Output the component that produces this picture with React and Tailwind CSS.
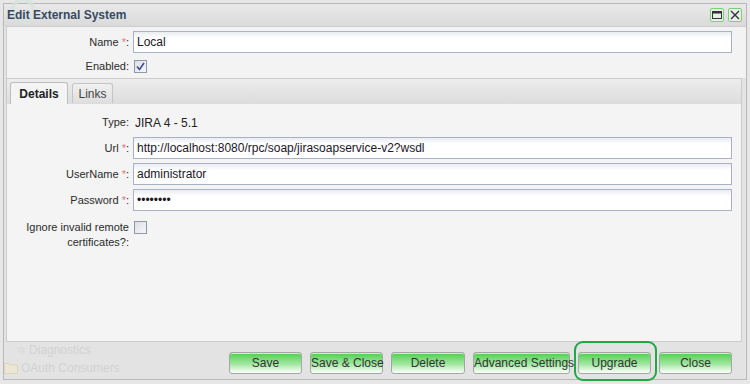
import { useState } from 'react'

const LABEL = "text-[11px] text-[#2b2b2b] font-['Liberation_Sans',Arial,sans-serif]"
const INPUT =
  "block h-[22px] w-[599px] border border-[#aab1c5] bg-gradient-to-b from-[#e9ecf1] via-white via-[30%] to-white px-[3px] text-[12px] text-[#1c1628] font-['Liberation_Sans',Arial,sans-serif] outline-none"

function Req() {
  return <span className="text-[#e87878]"> *</span>
}

function Row({ label, required, children, className = '' }) {
  return (
    <div className={`flex items-center ${className}`}>
      <div className={`w-[123px] pr-[1px] text-right ${LABEL}`}>
        {label}
        {required && <Req />}:
      </div>
      <div className="ml-[3px]">{children}</div>
    </div>
  )
}

function Checkbox({ checked, onChange }) {
  return (
    <button
      type="button"
      onClick={onChange}
      className="ml-[1px] flex h-[13px] w-[13px] items-center justify-center border border-[#8e98a8] bg-gradient-to-br from-[#dcdfe4] to-[#f6f7f9]"
    >
      {checked && (
        <svg width="9" height="9" viewBox="0 0 9 9">
          <path d="M1 4.5 L3.5 7.5 L8 1" fill="none" stroke="#3b4f8c" strokeWidth="1.6" />
        </svg>
      )}
    </button>
  )
}

function GreenButton({ label, width, highlight }) {
  return (
    <div className="relative shrink-0">
      <button
        type="button"
        style={{ width }}
        className="block h-[22px] whitespace-nowrap rounded-[3px] border border-[#a6a6a6] bg-gradient-to-b from-[#45d045] via-[#a0e6a0] via-[55%] to-white px-0 text-[12px] leading-[20px] text-[#333] font-['Liberation_Sans',Arial,sans-serif] shadow-[inset_0_1px_0_#c8f0c8]"
      >
        {label}
      </button>
      {highlight && (
        <div className="pointer-events-none absolute -left-[4px] -right-[6px] -top-[11px] -bottom-[7px] rounded-[9px] border-[2px] border-[#20a844]" />
      )}
    </div>
  )
}

export default function App() {
  const [tab, setTab] = useState('details')
  const [enabled, setEnabled] = useState(true)
  const [ignore, setIgnore] = useState(false)
  const [name, setName] = useState('Local')
  const [url, setUrl] = useState('http://localhost:8080/rpc/soap/jirasoapservice-v2?wsdl')
  const [user, setUser] = useState('administrator')
  const [pass, setPass] = useState('password')

  return (
    <div className="h-[384px] w-[750px] overflow-hidden bg-[#e7e7e7] pl-[3px] pt-[3px] font-['Liberation_Sans',Arial,sans-serif]">
      <div className="flex h-[377px] w-[744px] flex-col border border-[#b8b8b8] bg-[#e3e3e3]">
        {/* Title bar */}
        <div className="relative flex h-[22px] shrink-0 items-center justify-between bg-gradient-to-b from-[#e9e9e9] to-[#dadada] pl-[3px] pr-[4px]">
          <div className="pointer-events-none absolute left-[6px] top-[-6px] h-[26px] w-[26px] rounded-full border-[4px] border-[#d6e4dc] opacity-70" />
          <span className="relative text-[12px] font-bold text-[#374a62]">Edit External System</span>
          <div className="relative flex gap-[4px]">
            <div className="flex h-[14px] w-[14px] items-center justify-center rounded-[2px] border border-[#74d474] bg-[#ececec]">
              <svg width="10" height="8" viewBox="0 0 10 8">
                <rect x="0.5" y="0.5" width="9" height="7" fill="none" stroke="#333" />
                <rect x="0.5" y="0.5" width="9" height="2" fill="#333" />
              </svg>
            </div>
            <div className="flex h-[14px] w-[14px] items-center justify-center rounded-[2px] border border-[#74d474] bg-[#ececec]">
              <svg width="10" height="10" viewBox="0 0 10 10">
                <path d="M1 1 L9 9 M9 1 L1 9" stroke="#333" strokeWidth="1.4" />
              </svg>
            </div>
          </div>
        </div>

        {/* Top panel */}
        <div className="ml-[2px] h-[52px] shrink-0 border-l border-t border-[#cdcdcd] bg-[#f3f3f3] pt-[4px]">
          <Row label="Name" required>
            <input className={INPUT} value={name} onChange={e => setName(e.target.value)} />
          </Row>
          <Row label="Enabled" className="mt-[7px] h-[13px]">
            <Checkbox checked={enabled} onChange={() => setEnabled(!enabled)} />
          </Row>
        </div>

        {/* Tabs */}
        <div className="ml-[2px] mr-[4px] flex h-[26px] shrink-0 items-end gap-[4px] border-l border-t border-r border-[#cbcbcb] bg-gradient-to-b from-[#ededed] to-[#dcdcdc] pl-[3px]">
          <button
            type="button"
            onClick={() => setTab('details')}
            className={`-mb-[1px] h-[23px] w-[58px] rounded-t-[3px] border border-b-0 border-[#bdbdbd] text-[12px] ${tab === 'details' ? 'bg-[#f4f4f4] font-bold text-[#222]' : 'bg-gradient-to-b from-[#f0f0f0] to-[#dedede] text-[#444]'}`}
          >
            Details
          </button>
          <button
            type="button"
            onClick={() => setTab('links')}
            className={`mb-[1px] h-[20px] w-[41px] rounded-t-[3px] border border-b-0 border-[#c4c4c4] text-[12px] ${tab === 'links' ? 'bg-[#f4f4f4] font-bold text-[#222]' : 'bg-gradient-to-b from-[#f0f0f0] to-[#dedede] text-[#444]'}`}
          >
            Links
          </button>
        </div>

        {/* Tab content */}
        <div className="ml-[2px] mr-[4px] h-[238px] shrink-0 border border-t-0 border-[#cbcbcb] bg-[#f4f4f4] pt-[9px]">
          {tab === 'details' && (
            <>
              <Row label="Type" className="h-[18px]">
                <span className="pl-[2px] text-[12px] text-[#222]">JIRA 4 - 5.1</span>
              </Row>
              <Row label="Url" required className="mt-[6px]">
                <input className={INPUT} value={url} onChange={e => setUrl(e.target.value)} />
              </Row>
              <Row label="UserName" required className="mt-[4px]">
                <input className={INPUT} value={user} onChange={e => setUser(e.target.value)} />
              </Row>
              <Row label="Password" required className="mt-[4px]">
                <input type="password" className={INPUT} value={pass} onChange={e => setPass(e.target.value)} />
              </Row>
              <div className="mt-[9px] flex items-start">
                <div className={`w-[123px] pr-[1px] text-right leading-[15px] ${LABEL}`}>
                  Ignore invalid remote certificates?:
                </div>
                <div className="ml-[3px] pt-[1px]">
                  <Checkbox checked={ignore} onChange={() => setIgnore(!ignore)} />
                </div>
              </div>
            </>
          )}
        </div>

        {/* Footer */}
        <div className="flex min-h-0 flex-1 items-start">
          <div className="w-[225px] text-[12px] leading-[14px] text-[#d2d2d2]">
            <div className="mt-[1px] flex items-center gap-[3px] pl-[13px]">
              <span className="text-[11px] text-[#dadada]">✲</span>Diagnostics
            </div>
            <div className="mt-[4px] flex items-center gap-[3px]">
              <svg width="14" height="12" viewBox="0 0 14 12">
                <path d="M0.5 1.5 H5 L6.5 3 H13.5 V11.5 H0.5 Z" fill="#ece6d4" stroke="#dcd4bc" />
              </svg>
              OAuth Consumers
            </div>
          </div>
          <div className="mt-[10px] flex gap-[8px]">
            <GreenButton label="Save" width={73} />
            <GreenButton label="Save & Close" width={73} />
            <GreenButton label="Delete" width={74} />
            <GreenButton label="Advanced Settings" width={97} />
            <GreenButton label="Upgrade" width={73} highlight />
            <GreenButton label="Close" width={73} />
          </div>
        </div>
      </div>
    </div>
  )
}
